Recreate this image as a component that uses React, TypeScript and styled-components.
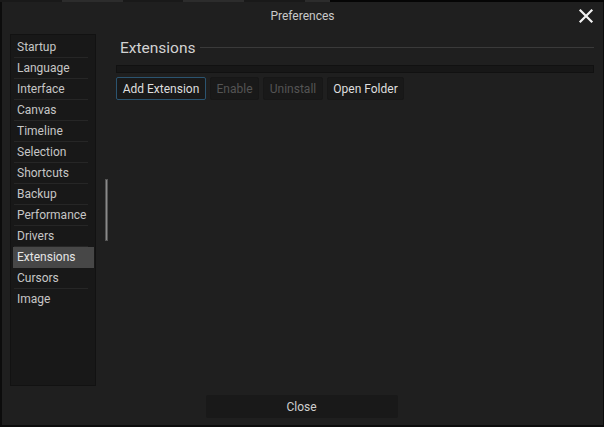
import React from "react";
import styled, { createGlobalStyle } from "styled-components";

const Global = createGlobalStyle`
  html, body { margin: 0; padding: 0; background: #0c0c0c; }
  body { font-family: Roboto, "Noto Sans", sans-serif; }
  * { box-sizing: border-box; }
`;

const Page = styled.div`
  width: 604px;
  height: 427px;
  display: flex;
  flex-direction: column;
  background: #0c0c0c;
  overflow: hidden;
`;

const Backdrop = styled.div`
  height: 2px;
  display: flex;
  background: #151515;
`;

const BackdropSeg = styled.div<{ $w: number; $light?: boolean; $black?: boolean }>`
  width: ${(p) => p.$w}px;
  flex: ${(p) => (p.$black ? "1" : "none")};
  background: ${(p) => (p.$black ? "#050505" : p.$light ? "#2c2c2c" : "#191919")};
`;

const Dialog = styled.div`
  margin-left: 2px;
  width: 601px;
  height: 423px;
  background: #1f1f1f;
  display: flex;
  flex-direction: column;
`;

const TitleBar = styled.div`
  height: 28px;
  position: relative;
  display: flex;
  align-items: center;
  justify-content: center;
  color: #c9c9c9;
  font-size: 12px;
`;

const CloseX = styled.svg`
  position: absolute;
  right: 9px;
  top: 6px;
`;

const Body = styled.div`
  margin-top: 4px;
  height: 352px;
  display: flex;
  padding: 0 9px 0 8px;
`;

const Sidebar = styled.div`
  width: 86px;
  background: #181818;
  border: 1px solid #121212;
  padding-top: 2px;
  display: flex;
  flex-direction: column;
`;

const Item = styled.div<{ $active?: boolean; $last?: boolean }>`
  height: 21px;
  margin: 0 1px 0 2px;
  padding: 0 0 2px 4px;
  display: flex;
  align-items: center;
  font-size: 12px;
  color: ${(p) => (p.$active ? "#e6e6e6" : "#c6c6c6")};
  background: ${(p) => (p.$active ? "#474747" : "transparent")};
  position: relative;
  &::after {
    content: "";
    position: absolute;
    left: 1px;
    width: 74px;
    bottom: 0;
    height: 1px;
    background: ${(p) => (p.$active || p.$last ? "transparent" : "#262626")};
  }
`;

const ScrollCol = styled.div`
  width: 20px;
  padding: 145px 0 0 9px;
`;

const Thumb = styled.div`
  width: 3px;
  height: 62px;
  background: #8a8a8a;
  border: 1px solid #555;
`;

const Content = styled.div`
  flex: 1;
  display: flex;
  flex-direction: column;
`;

const Header = styled.div`
  height: 28px;
  display: flex;
  align-items: center;
  padding-left: 4px;
`;

const HeaderText = styled.span`
  font-size: 15.5px;
  color: #d2d2d2;
`;

const HeaderLine = styled.div`
  flex: 1;
  height: 1px;
  background: #3a3a3a;
  margin-left: 4px;
  margin-top: -2px;
`;

const ListBar = styled.div`
  margin-top: 3px;
  height: 8px;
  background: #171717;
  border: 1px solid #111111;
`;

const Buttons = styled.div`
  margin-top: 4px;
  display: flex;
  gap: 4px;
`;

const Btn = styled.div<{ $w: number; $focus?: boolean; $disabled?: boolean }>`
  width: ${(p) => p.$w}px;
  height: 23px;
  display: flex;
  align-items: center;
  justify-content: center;
  font-size: 12px;
  background: #191919;
  border: 1px solid ${(p) => (p.$focus ? "#2b5470" : "#171717")};
  border-radius: 2px;
  color: ${(p) => (p.$disabled ? "#545454" : "#dedede")};
`;

const Footer = styled.div`
  margin-top: 9px;
  display: flex;
  justify-content: center;
  padding-right: 2px;
`;

const CloseBtn = styled.div`
  width: 192px;
  height: 23px;
  display: flex;
  align-items: center;
  justify-content: center;
  background: #191919;
  border-radius: 2px;
  color: #cfcfcf;
  font-size: 12px;
`;

const items = [
  "Startup",
  "Language",
  "Interface",
  "Canvas",
  "Timeline",
  "Selection",
  "Shortcuts",
  "Backup",
  "Performance",
  "Drivers",
  "Extensions",
  "Cursors",
  "Image",
];

export default function App() {
  return (
    <Page>
      <Global />
      <Backdrop>
        <BackdropSeg $w={62} />
        <BackdropSeg $w={61} $light />
        <BackdropSeg $w={60} />
        <BackdropSeg $w={61} $light />
        <BackdropSeg $w={61} />
        <BackdropSeg $w={25} $light />
        <BackdropSeg $w={1} $black />
      </Backdrop>
      <Dialog>
        <TitleBar>
          Preferences
          <CloseX width="16" height="16" viewBox="0 0 16 16">
            <path d="M2.5 2.5 L13.5 13.5 M13.5 2.5 L2.5 13.5" stroke="#f2f2f2" strokeWidth="2.2" strokeLinecap="square" />
          </CloseX>
        </TitleBar>
        <Body>
          <Sidebar>
            {items.map((it, i) => (
              <Item key={it} $active={it === "Extensions"} $last={i === items.length - 1}>
                {it}
              </Item>
            ))}
          </Sidebar>
          <ScrollCol>
            <Thumb />
          </ScrollCol>
          <Content>
            <Header>
              <HeaderText>Extensions</HeaderText>
              <HeaderLine />
            </Header>
            <ListBar />
            <Buttons>
              <Btn $w={90} $focus>Add Extension</Btn>
              <Btn $w={49} $disabled>Enable</Btn>
              <Btn $w={60} $disabled>Uninstall</Btn>
              <Btn $w={77}>Open Folder</Btn>
            </Buttons>
          </Content>
        </Body>
        <Footer>
          <CloseBtn>Close</CloseBtn>
        </Footer>
      </Dialog>
    </Page>
  );
}
